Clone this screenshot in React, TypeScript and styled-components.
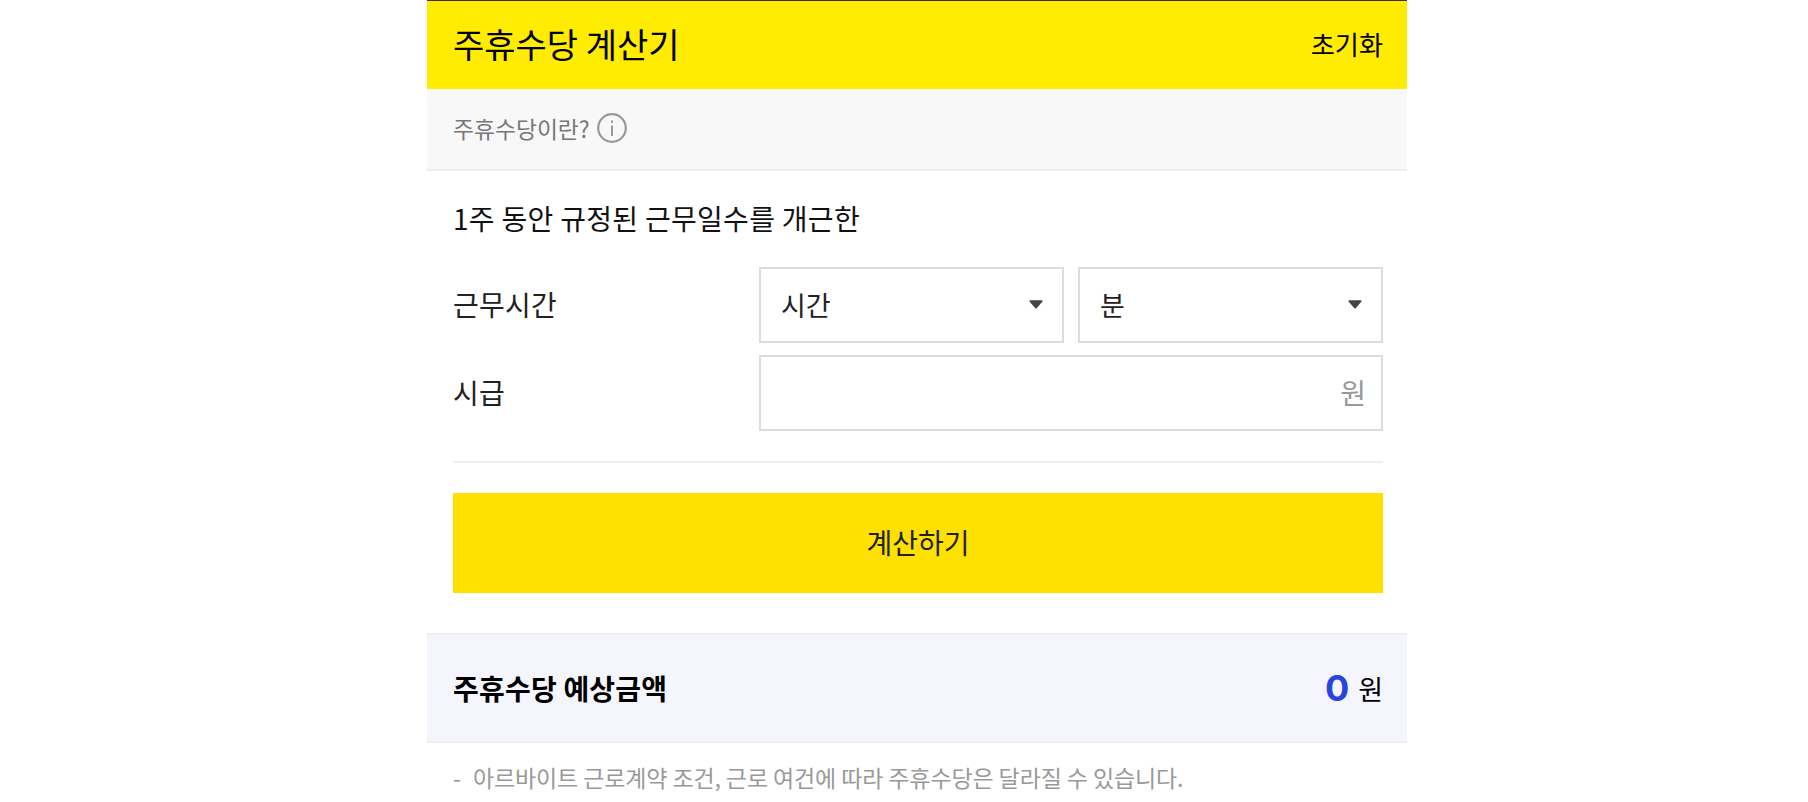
import React from "react";
import styled, { createGlobalStyle } from "styled-components";

const Global = createGlobalStyle`
  html, body { margin: 0; padding: 0; background: #fff; height: 100%; overflow: hidden; }
  body { font-family: "Noto Sans CJK KR", "Noto Sans", sans-serif; color: #000; }
  * { box-sizing: border-box; }
`;

const Page = styled.main`
  width: 980px;
  margin: 0 0 0 427px;
  border-top: 1px solid #33331f;
`;

const Header = styled.header`
  height: 88px;
  padding: 0 24px 3px 26px;
  background: #ffec00;
  display: flex;
  align-items: center;
  justify-content: space-between;
`;

const Title = styled.h1`
  margin: 0;
  font-size: 34px;
  font-weight: 400;
  line-height: 1;
`;

const Reset = styled.button`
  border: 0;
  padding: 0;
  background: none;
  font: inherit;
  font-size: 26.2px;
  color: #000;
`;

const InfoBar = styled.div`
  height: 82px;
  padding: 0 26px 2px;
  background: #f8f8f8;
  border-bottom: 2px solid #eeeeee;
  display: flex;
  align-items: center;
  gap: 7px;
  font-size: 22.8px;
  color: #777;
`;

const Form = styled.section`
  padding: 28px 24px 40px 26px;
`;

const Lead = styled.p`
  margin: 0 0 30px;
  font-size: 28px;
  line-height: 38px;
  letter-spacing: 0.3px;
  color: #111;
`;

const Row = styled.div`
  display: grid;
  grid-template-columns: 306px 1fr;
  align-items: center;
  margin-bottom: 12px;
`;

const Label = styled.label`
  padding-bottom: 2px;
  font-size: 28px;
  letter-spacing: 0.2px;
  color: #222;
`;

const Fields = styled.div`
  display: flex;
  gap: 14px;
`;

const Select = styled.div`
  flex: 1;
  height: 76px;
  padding: 0 19px 2px 20px;
  border: 2px solid #ddd;
  display: flex;
  align-items: center;
  justify-content: space-between;
  font-size: 27px;
  color: #222;
`;

const Amount = styled.div`
  flex: 1;
  height: 76px;
  padding: 0 15px 2px;
  border: 2px solid #ddd;
  display: flex;
  align-items: center;
  justify-content: flex-end;
  font-size: 28px;
  color: #999;
`;

const Divider = styled.hr`
  margin: 30px 0;
  border: 0;
  border-top: 2px solid #eee;
`;

const Submit = styled.button`
  display: block;
  width: 100%;
  height: 100px;
  padding: 0 0 2px;
  border: 0;
  background: #ffe100;
  font: inherit;
  font-size: 28px;
  color: #222;
`;

const Result = styled.section`
  height: 110px;
  padding: 0 24px 0 26px;
  background: #f5f6fd;
  border-top: 2px solid #eeeeee;
  border-bottom: 2px solid #eeeeee;
  display: flex;
  align-items: center;
  justify-content: space-between;
`;

const ResultLabel = styled.strong`
  font-size: 28px;
  font-weight: 700;
  letter-spacing: 0.2px;
`;

const ResultValue = styled.div`
  display: flex;
  align-items: center;
  gap: 9px;
  font-size: 27px;
`;

const Zero = styled.span`
  font-family: Inter, sans-serif;
  font-size: 36px;
  font-weight: 700;
  line-height: 1;
  color: #2a45e0;
`;

const Notes = styled.ul`
  margin: 0;
  padding: 17px 26px 0;
  list-style: none;
  font-size: 23px;
  letter-spacing: -0.11px;
  color: #999;
`;

const Note = styled.li`
  display: flex;
  gap: 12px;
`;

const Caret = () => (
  <svg width="14" height="9" viewBox="0 0 14 9" aria-hidden="true">
    <path d="M0.3 1.2 Q0.3 0.3 1.3 0.3 H12.7 Q13.7 0.3 13.7 1.2 L7.7 8.2 Q7 8.8 6.3 8.2 Z" fill="#444" />
  </svg>
);

const InfoIcon = () => (
  <svg width="30" height="30" viewBox="0 0 30 30" aria-hidden="true">
    <circle cx="15" cy="15" r="13.8" fill="none" stroke="#999" strokeWidth="2.2" />
    <rect x="14" y="12.5" width="2" height="10.5" fill="#999" />
    <rect x="14" y="7.5" width="2" height="2.5" fill="#999" />
  </svg>
);

export default function App() {
  return (
    <Page>
      <Global />
      <Header>
        <Title>주휴수당 계산기</Title>
        <Reset type="button">초기화</Reset>
      </Header>
      <InfoBar>
        주휴수당이란?
        <InfoIcon />
      </InfoBar>
      <Form>
        <Lead>1주 동안 규정된 근무일수를 개근한</Lead>
        <Row>
          <Label>근무시간</Label>
          <Fields>
            <Select>
              시간
              <Caret />
            </Select>
            <Select>
              분
              <Caret />
            </Select>
          </Fields>
        </Row>
        <Row>
          <Label>시급</Label>
          <Fields>
            <Amount>원</Amount>
          </Fields>
        </Row>
        <Divider />
        <Submit type="button">계산하기</Submit>
      </Form>
      <Result>
        <ResultLabel>주휴수당 예상금액</ResultLabel>
        <ResultValue>
          <Zero>0</Zero>원
        </ResultValue>
      </Result>
      <Notes>
        <Note>
          <span>-</span>
          <span>아르바이트 근로계약 조건, 근로 여건에 따라 주휴수당은 달라질 수 있습니다.</span>
        </Note>
      </Notes>
    </Page>
  );
}
